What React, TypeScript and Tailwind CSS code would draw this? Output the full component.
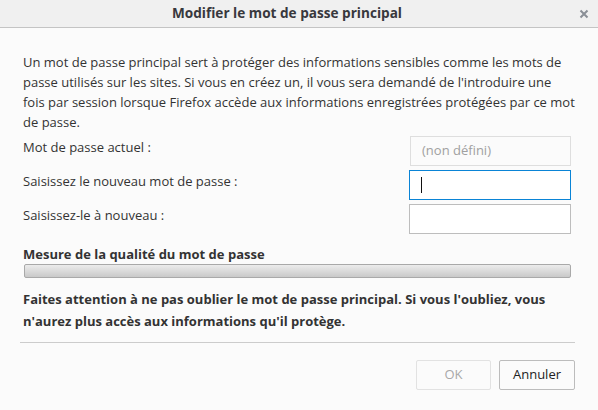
export default function App() {
  const font = { fontFamily: '"Open Sans", "Noto Sans", sans-serif' };
  return (
    <div
      className="w-[598px] h-[410px] bg-[#fbfbfb] text-[#333333] text-[13px] overflow-hidden"
      style={font}
    >
      <div className="relative h-[28px] bg-[#f0f0f0] border-b border-[#c4c4c4] flex items-center justify-center pr-[24px]">
        <span className="font-bold text-[13.6px] text-[#38383d]">Modifier le mot de passe principal</span>
        <button className="absolute right-[9px] top-[9px] w-[10px] h-[10px] flex items-center justify-center">
          <svg width="10" height="10" viewBox="0 0 10 10">
            <path d="M1.5 1.5 L8.5 8.5 M8.5 1.5 L1.5 8.5" stroke="#8a8f96" strokeWidth="2" />
          </svg>
        </button>
      </div>

      <div className="pl-[23px] pr-[27px] pt-[24px]">
        <p className="leading-[20px] whitespace-nowrap">
          Un mot de passe principal sert à protéger des informations sensibles comme les mots de
          <br />
          passe utilisés sur les sites. Si vous en créez un, il vous sera demandé de l'introduire une
          <br />
          fois par session lorsque Firefox accède aux informations enregistrées protégées par ce mot
          <br />
          de passe.
        </p>

        <div className="mt-[4px] flex flex-col gap-[4px]">
          <div className="flex items-start justify-between">
            <span className="leading-[20px] pt-[1px]">Mot de passe actuel :</span>
            <div className="w-[161px] h-[30px] border border-[#dedede] bg-[#fbfbfb] flex items-center pl-[11px] text-[#a0a0a0]">
              (non défini)
            </div>
          </div>
          <div className="flex items-start justify-between">
            <span className="leading-[20px] pt-[1px]">Saisissez le nouveau mot de passe :</span>
            <div className="w-[162px] h-[30px] border border-[#0a84d6] bg-white flex items-center pl-[11px]">
              <div className="w-[1px] h-[16px] bg-[#111]" />
            </div>
          </div>
          <div className="flex items-start justify-between">
            <span className="leading-[20px] pt-[1px]">Saisissez-le à nouveau :</span>
            <div className="w-[162px] h-[30px] border border-[#bdbdbd] bg-white" />
          </div>
        </div>

        <div className="mt-[10px] font-bold leading-[20px]">Mesure de la qualité du mot de passe</div>
        <div className="ml-[1px] h-[14px] rounded-[2px] border border-[#a9a9a9] bg-gradient-to-b from-[#ececec] to-[#c9c9c9]" />

        <p className="mt-[10px] font-bold leading-[22px]">
          Faites attention à ne pas oublier le mot de passe principal. Si vous l'oubliez, vous n'aurez
          plus accès aux informations qu'il protège.
        </p>
      </div>

      <div className="ml-[20px] mr-[23px] mt-[10px] border-t border-[#cccccc]" />

      <div className="flex justify-end gap-[8px] pr-[23px] mt-[17px]">
        <button className="w-[75px] h-[30px] border border-[#e2e2e2] rounded-[2px] bg-[#fbfbfb] text-[#a8a8a8]">
          OK
        </button>
        <button className="w-[76px] h-[30px] border border-[#bcbcbc] rounded-[2px] bg-[#fbfbfb] text-[#222]">
          Annuler
        </button>
      </div>
    </div>
  );
}
